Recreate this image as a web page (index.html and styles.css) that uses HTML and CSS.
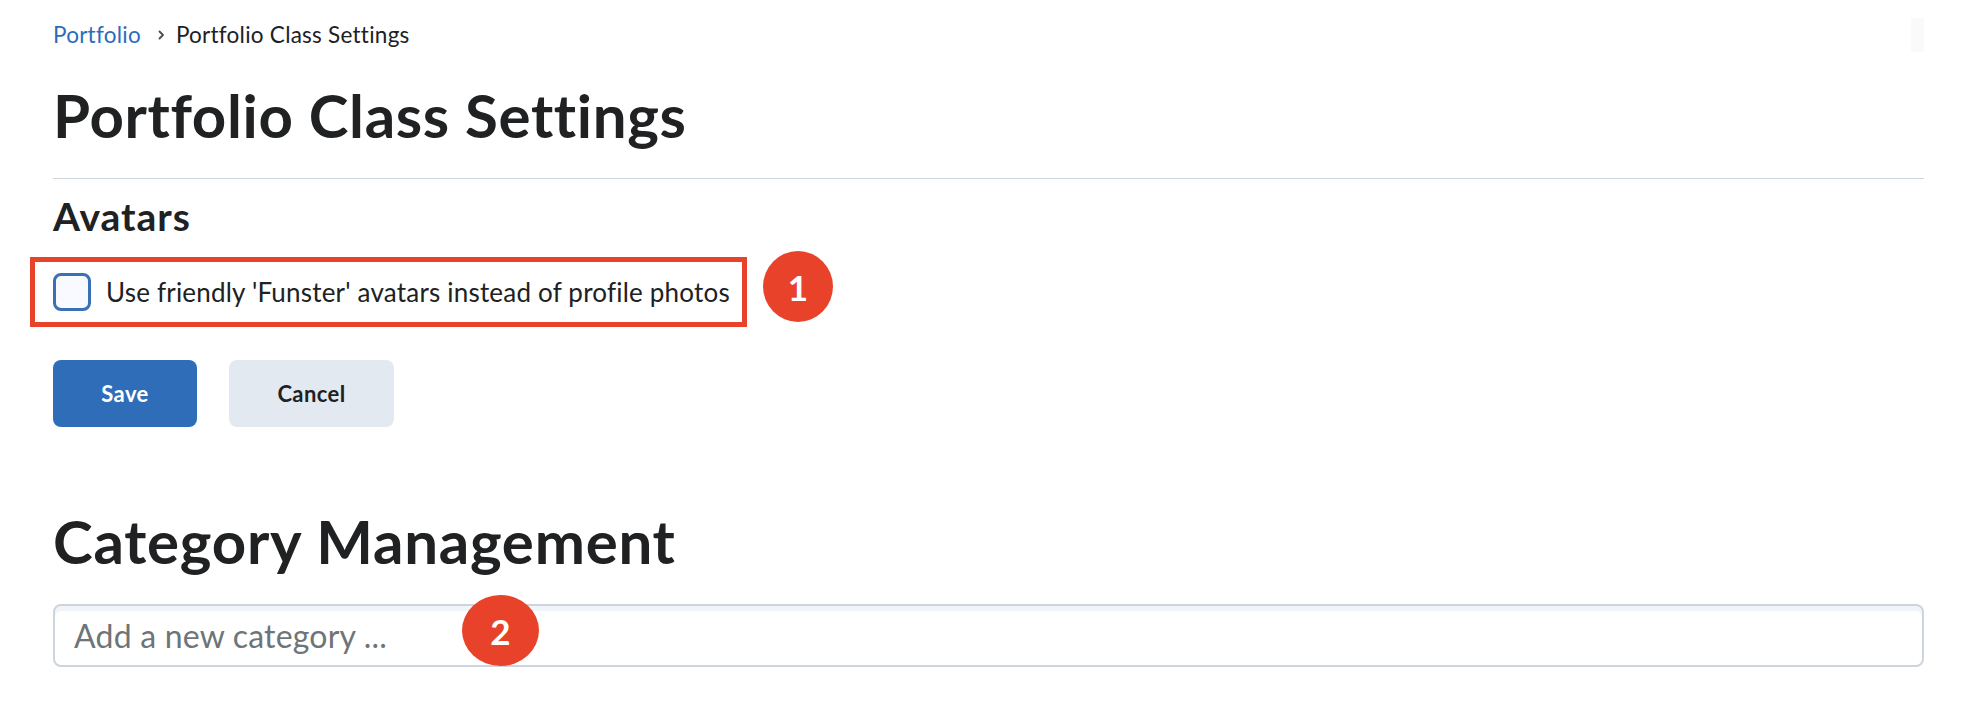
FILE: index.html
```html
<!DOCTYPE html>
<html lang="en">
<head>
    <meta charset="UTF-8">
    <title>Portfolio Class Settings</title>
    <link rel="stylesheet" href="styles.css">
</head>
<body>
    <div class="page">
        <nav class="crumbs">
            <a href="#">Portfolio</a>
            <svg class="chev" width="8" height="12" viewBox="0 0 8 12"><path d="M2.5 2.5l3.5 3.5-3.5 3.5" fill="none" stroke="#494c4e" stroke-width="1.8" stroke-linecap="round" stroke-linejoin="round"/></svg>
            <span>Portfolio Class Settings</span>
            <span class="corner"></span>
        </nav>

        <h1 class="title">Portfolio Class Settings</h1>

        <h2 class="sub">Avatars</h2>
        <div class="option">
            <label class="check">
                <input type="checkbox">
                Use friendly 'Funster' avatars instead of profile photos
            </label>
            <span class="mark"></span>
            <span class="badge one">1</span>
        </div>

        <div class="actions">
            <button class="btn primary">Save</button>
            <button class="btn">Cancel</button>
        </div>

        <h1 class="cat">Category Management</h1>
        <div class="field">
            <input type="text" placeholder="Add a new category ...">
            <span class="badge two">2</span>
        </div>
    </div>
</body>
</html>
```

FILE: styles.css
```css
/* page */
body {
    margin: 0;
    background: #fff;
    color: #202122;
    font-family: Lato, "Noto Sans", sans-serif;
    font-variant-ligatures: none;
}

.page {
    padding: 0 42px 40px 53px;
}

/* breadcrumbs */
.crumbs {
    display: flex;
    align-items: center;
    padding-top: 22px;
    height: 26px;
    font-size: 22.5px;
    letter-spacing: 0.25px;
    line-height: 26px;
}

.crumbs a {
    color: #2b6dbb;
    text-decoration: none;
}

.chev {
    margin: 0 11px 0 16px;
}

.corner {
    margin-left: auto;
    width: 13px;
    height: 34px;
    background: #fafafa;
}

/* headings */
h1 {
    font-size: 60px;
    letter-spacing: 0.65px;
    line-height: 70px;
    font-weight: 700;
    margin: 0;
}

.title {
    margin-top: 32px;
    padding-bottom: 28px;
    border-bottom: 1px solid #cfd6dd;
}

.sub {
    font-size: 39px;
    letter-spacing: 1px;
    line-height: 45px;
    font-weight: 700;
    margin: 15px 0 0;
}

/* checkbox option */
.option {
    position: relative;
    display: flex;
    align-items: center;
    margin-top: 34px;
    height: 38px;
}

.check {
    display: flex;
    align-items: center;
    gap: 15px;
    font-size: 26px;
    letter-spacing: 0.2px;
    line-height: 38px;
}

.check input {
    appearance: none;
    margin: 0;
    width: 38px;
    height: 38px;
    border: 3px solid #3a70b6;
    border-radius: 8px;
    background: #f8faff;
    box-sizing: border-box;
}

/* annotation marks */
.mark {
    position: absolute;
    left: -23px;
    top: -16px;
    width: 717px;
    height: 70px;
    border: 5px solid #e8432a;
    box-sizing: border-box;
}

.badge {
    position: absolute;
    display: flex;
    align-items: center;
    justify-content: center;
    width: 70px;
    height: 71px;
    border-radius: 50%;
    background: #e8432a;
    color: #fff;
    font-size: 35px;
    font-weight: 700;
    letter-spacing: 0;
}

.one {
    left: 710px;
    top: -22px;
}

.two {
    left: 409px;
    top: -9px;
    width: 77px;
}

/* buttons */
.actions {
    display: flex;
    gap: 32px;
    margin-top: 49px;
}

.btn {
    height: 67px;
    border: none;
    border-radius: 8px;
    background: #e3e9f1;
    color: #202122;
    font-family: inherit;
    font-size: 22px;
    letter-spacing: 0.4px;
    font-weight: 700;
    width: 165px;
}

.btn.primary {
    width: 144px;
    background: #306db9;
    color: #fff;
}

/* category */
.cat {
    margin-top: 79px;
    letter-spacing: 0.75px;
}

.field {
    position: relative;
    margin-top: 28px;
}

.field input {
    display: block;
    width: 100%;
    height: 63px;
    box-sizing: border-box;
    border: 2px solid #cdd4db;
    border-radius: 8px;
    box-shadow: inset 0 5px 0 #f1f4f9;
    padding: 0 19px;
    font-family: inherit;
    font-size: 32px;
    letter-spacing: 0.2px;
    color: #202122;
}

.field input::placeholder {
    color: #6e7477;
}
```
